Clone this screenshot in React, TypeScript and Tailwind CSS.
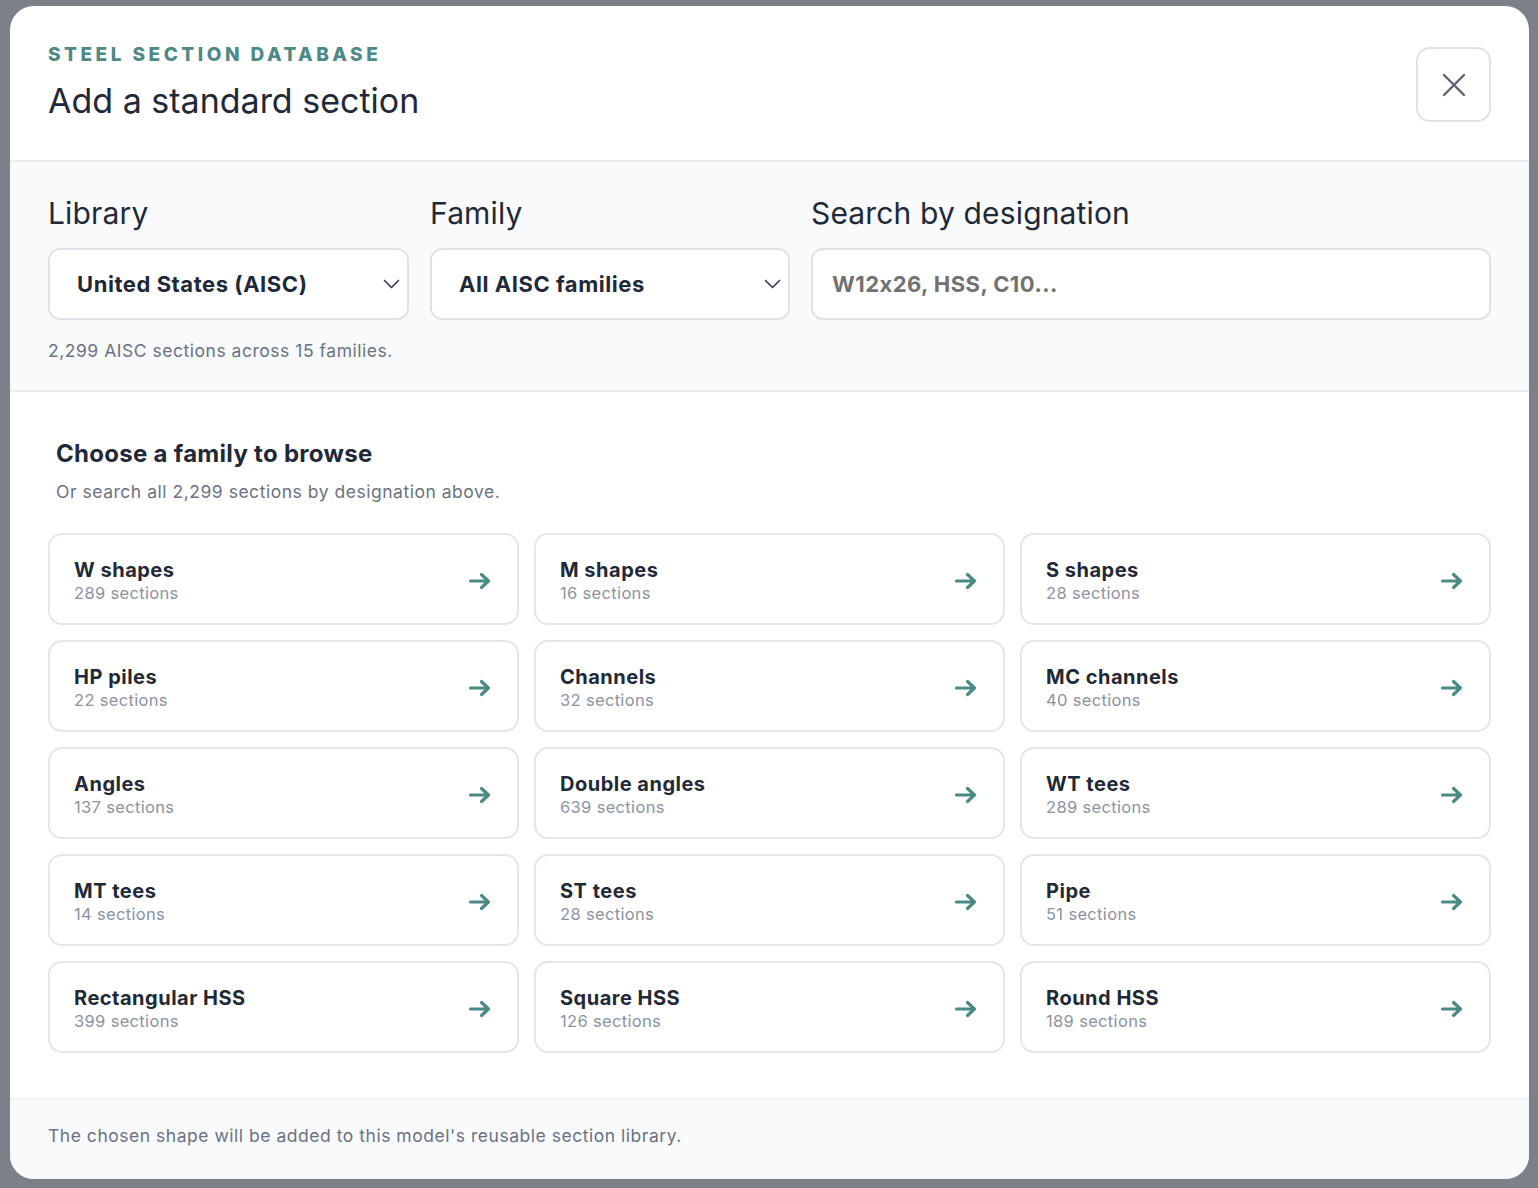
const families = [
  { name: "W shapes", count: 289 },
  { name: "M shapes", count: 16 },
  { name: "S shapes", count: 28 },
  { name: "HP piles", count: 22 },
  { name: "Channels", count: 32 },
  { name: "MC channels", count: 40 },
  { name: "Angles", count: 137 },
  { name: "Double angles", count: 639 },
  { name: "WT tees", count: 289 },
  { name: "MT tees", count: 14 },
  { name: "ST tees", count: 28 },
  { name: "Pipe", count: 51 },
  { name: "Rectangular HSS", count: 399 },
  { name: "Square HSS", count: 126 },
  { name: "Round HSS", count: 189 },
];

function Chevron() {
  return (
    <svg width="17" height="10" viewBox="0 0 17 10" fill="none">
      <path
        d="M1.5 1.5l7 7 7-7"
        stroke="#374151"
        strokeWidth="1.7"
        strokeLinecap="round"
        strokeLinejoin="round"
      />
    </svg>
  );
}

function SelectBox({ value }: { value: string }) {
  return (
    <div className="h-[72px] rounded-[12px] border-2 border-[#dfe3e9] bg-white flex items-center justify-between pl-[27px] pr-[7px]">
      <span className="text-[22px] leading-[28px] font-bold tracking-[0.025em] text-[#1f2937]">
        {value}
      </span>
      <Chevron />
    </div>
  );
}

export default function App() {
  return (
    <div className="w-[1538px] h-[1188px] bg-[#7b8089] pt-[6px] pl-[10px] font-['Inter',sans-serif] [font-feature-settings:'calt'_0]">
      <div className="w-[1519px] h-[1173px] rounded-[24px] bg-white overflow-hidden flex flex-col">
        {/* header */}
        <div className="flex justify-between items-start px-[38px] pt-[37px] pb-[38px] border-b-2 border-[#e8ecf0]">
          <div>
            <div className="text-[19px] leading-[24px] font-extrabold tracking-[0.185em] text-[#4d8a86]">
              STEEL SECTION DATABASE
            </div>
            <h1 className="mt-[12px] text-[34px] leading-[43px] text-[#1f2937]">
              Add a standard section
            </h1>
          </div>
          <button className="mt-[4px] w-[75px] h-[75px] rounded-[14px] border-2 border-[#dfe3e9] flex items-center justify-center">
            <svg width="24" height="24" viewBox="0 0 24 24" fill="none">
              <path
                d="M2 2l20 20M22 2L2 22"
                stroke="#5b6270"
                strokeWidth="2.4"
                strokeLinecap="round"
              />
            </svg>
          </button>
        </div>

        {/* filters */}
        <div className="bg-[#f8fafc] px-[38px] pt-[33px] pb-[27px] border-b-2 border-[#e8ecf0]">
          <div className="grid grid-cols-[361px_360px_1fr] gap-x-[21px]">
            <div>
              <div className="text-[30px] leading-[36px] tracking-[0.005em] text-[#1f2937] mb-[17px]">Library</div>
              <SelectBox value="United States (AISC)" />
            </div>
            <div>
              <div className="text-[30px] leading-[36px] tracking-[0.005em] text-[#1f2937] mb-[17px]">Family</div>
              <SelectBox value="All AISC families" />
            </div>
            <div>
              <div className="text-[30px] leading-[36px] tracking-[0.005em] text-[#1f2937] mb-[17px]">
                Search by designation
              </div>
              <div className="h-[72px] rounded-[12px] border-2 border-[#dfe3e9] bg-white flex items-center px-[19px]">
                <span className="text-[22px] leading-[28px] font-bold tracking-[0.02em] text-[#727272]">
                  W12x26, HSS, C10...
                </span>
              </div>
            </div>
          </div>
          <p className="mt-[19px] text-[17.5px] leading-[24px] tracking-[0.03em] text-[#6b7280]">
            2,299 AISC sections across 15 families.
          </p>
        </div>

        {/* body */}
        <div className="flex-1 px-[38px] pt-[46px]">
          <div className="px-[8px]">
            <h2 className="text-[24px] leading-[32px] font-bold tracking-[0.012em] text-[#1f2937]">
              Choose a family to browse
            </h2>
            <p className="mt-[10px] text-[17.5px] leading-[24px] text-[#6b7280] tracking-[0.03em]">
              Or search all 2,299 sections by designation above.
            </p>
          </div>

          <div className="mt-[29px] grid grid-cols-3 gap-[15px]">
            {families.map((f) => (
              <div
                key={f.name}
                className="h-[92px] rounded-[14px] border-2 border-[#e3e7ec] bg-white flex items-center justify-between pl-[24px] pr-[25px]"
              >
                <div className="pt-[3px]">
                  <div className="text-[20px] leading-[24px] font-bold text-[#1f2937] tracking-[0.025em]">
                    {f.name}
                  </div>
                  <div className="text-[16.5px] leading-[22px] text-[#8b93a1] tracking-[0.02em]">
                    {f.count} sections
                  </div>
                </div>
                <svg className="mt-[3px]" width="24" height="20" viewBox="0 0 24 20" fill="none">
                  <path
                    d="M2.5 10h18M13.5 3.5l7 6.5-7 6.5"
                    stroke="#4a8a86"
                    strokeWidth="3.2"
                    strokeLinecap="round"
                    strokeLinejoin="round"
                  />
                </svg>
              </div>
            ))}
          </div>
        </div>

        {/* footer */}
        <div className="h-[81px] shrink-0 bg-[#f8fafc] border-t-2 border-[#eef1f4] pt-[24px] px-[38px]">
          <p className="text-[17.5px] leading-[24px] tracking-[0.03em] text-[#6b7280]">
            The chosen shape will be added to this model's reusable section library.
          </p>
        </div>
      </div>
    </div>
  );
}
